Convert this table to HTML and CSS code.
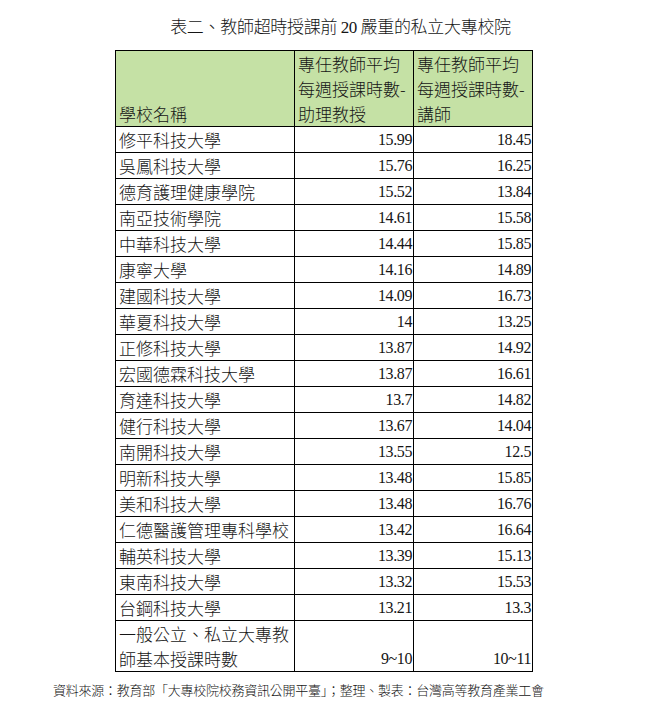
FILE: index.html
```html
<!DOCTYPE html>
<html lang="zh-Hant">
<head>
<meta charset="utf-8">
<title>表二、教師超時授課前 20 嚴重的私立大專校院</title>
<link rel="stylesheet" href="styles.css">
</head>
<body>
<div class="page">
  <h1 class="title">表二、教師超時授課前 <span class="num-inline">20</span> 嚴重的私立大專校院</h1>
  <table class="data">
    <colgroup>
      <col class="c-name">
      <col class="c-val">
      <col class="c-val">
    </colgroup>
    <thead>
      <tr class="head">
        <th class="h-name">學校名稱</th>
        <th class="h-val">專任教師平均<br>每週授課時數-<br>助理教授</th>
        <th class="h-val">專任教師平均<br>每週授課時數-<br>講師</th>
      </tr>
    </thead>
    <tbody>
      <tr><td class="name">修平科技大學</td><td class="num">15.99</td><td class="num">18.45</td></tr>
      <tr><td class="name">吳鳳科技大學</td><td class="num">15.76</td><td class="num">16.25</td></tr>
      <tr><td class="name">德育護理健康學院</td><td class="num">15.52</td><td class="num">13.84</td></tr>
      <tr><td class="name">南亞技術學院</td><td class="num">14.61</td><td class="num">15.58</td></tr>
      <tr><td class="name">中華科技大學</td><td class="num">14.44</td><td class="num">15.85</td></tr>
      <tr><td class="name">康寧大學</td><td class="num">14.16</td><td class="num">14.89</td></tr>
      <tr><td class="name">建國科技大學</td><td class="num">14.09</td><td class="num">16.73</td></tr>
      <tr><td class="name">華夏科技大學</td><td class="num">14</td><td class="num">13.25</td></tr>
      <tr><td class="name">正修科技大學</td><td class="num">13.87</td><td class="num">14.92</td></tr>
      <tr><td class="name">宏國德霖科技大學</td><td class="num">13.87</td><td class="num">16.61</td></tr>
      <tr><td class="name">育達科技大學</td><td class="num">13.7</td><td class="num">14.82</td></tr>
      <tr><td class="name">健行科技大學</td><td class="num">13.67</td><td class="num">14.04</td></tr>
      <tr><td class="name">南開科技大學</td><td class="num">13.55</td><td class="num">12.5</td></tr>
      <tr><td class="name">明新科技大學</td><td class="num">13.48</td><td class="num">15.85</td></tr>
      <tr><td class="name">美和科技大學</td><td class="num">13.48</td><td class="num">16.76</td></tr>
      <tr><td class="name">仁德醫護管理專科學校</td><td class="num">13.42</td><td class="num">16.64</td></tr>
      <tr><td class="name">輔英科技大學</td><td class="num">13.39</td><td class="num">15.13</td></tr>
      <tr><td class="name">東南科技大學</td><td class="num">13.32</td><td class="num">15.53</td></tr>
      <tr><td class="name">台鋼科技大學</td><td class="num">13.21</td><td class="num">13.3</td></tr>
      <tr class="base"><td class="name">一般公立、私立大專教<br>師基本授課時數</td><td class="num">9~10</td><td class="num">10~11</td></tr>
    </tbody>
  </table>
  <p class="source">資料來源：教育部「大專校院校務資訊公開平臺」；整理、製表：台灣高等教育產業工會</p>
</div>
</body>
</html>
```

FILE: styles.css
```css
html, body {
  margin: 0;
  padding: 0;
  background: #ffffff;
}

body {
  font-family: "Noto Sans CJK TC", "Noto Sans", sans-serif;
  font-weight: 300;
  color: #151515;
}

.page {
  width: 651px;
  padding-top: 14px;
}

.title {
  margin: 0;
  padding-left: 30px;
  text-align: center;
  font-size: 17px;
  line-height: 24px;
  font-weight: 300;
  letter-spacing: -0.3px;
}

.num-inline {
  font-family: "Liberation Serif", serif;
  font-weight: 400;
  font-size: 17px;
}

.data {
  margin: 10px 0 0 115px;
  width: 418px;
  border-collapse: collapse;
  table-layout: fixed;
}

.c-name { width: 179px; }
.c-val { width: 119px; }

.data th,
.data td {
  border: 1px solid #000;
  padding: 0 3px;
  height: 25px;
  line-height: 25px;
  vertical-align: bottom;
  font-size: 17px;
  font-weight: 300;
  text-align: left;
  white-space: nowrap;
}

.head th {
  background: #c5e1a5;
  height: 74px;
}

.data td.num {
  text-align: right;
  padding-right: 1px;
  font-family: "Liberation Serif", serif;
  font-weight: 400;
  font-size: 16px;
  letter-spacing: -0.4px;
}

.base td {
  height: 50px;
}

.source {
  margin: 9px 0 0;
  padding-left: 53px;
  font-size: 13px;
  line-height: 18px;
  font-weight: 300;
  letter-spacing: -0.25px;
}
```
